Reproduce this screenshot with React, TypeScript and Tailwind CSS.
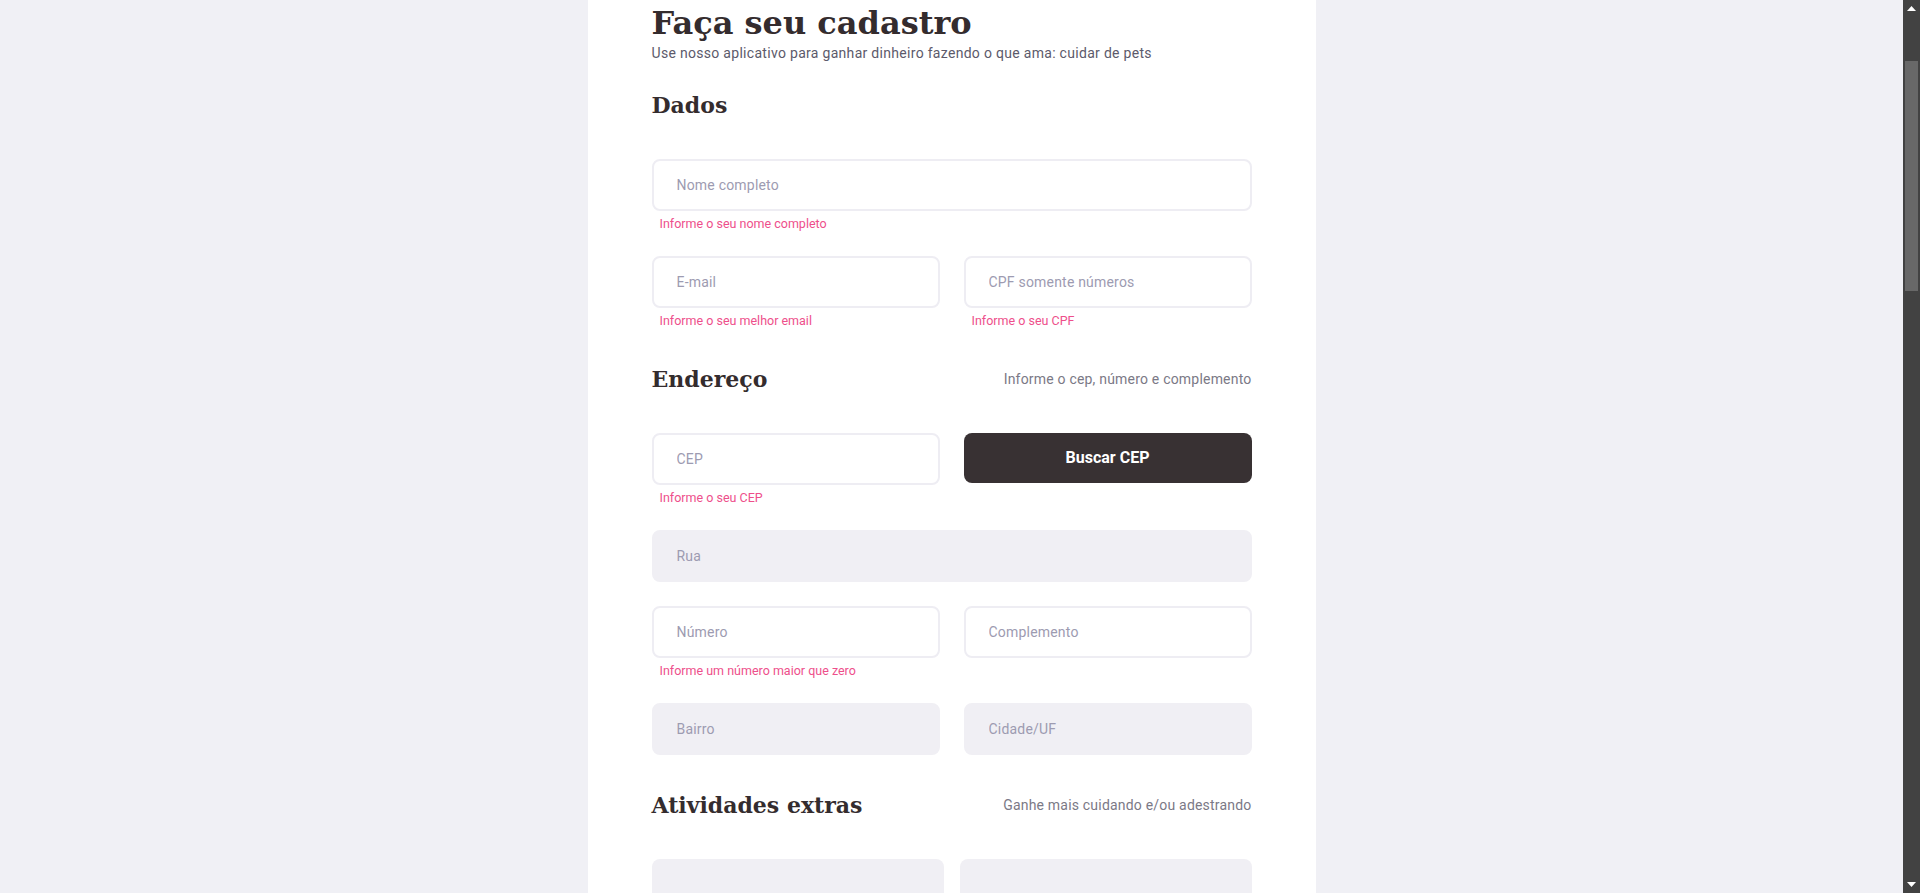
import type { ReactNode } from "react";

const body = "font-['Roboto','Liberation_Sans',sans-serif]";
const serif = "font-['DejaVu_Serif','Liberation_Serif',serif]";

function Field({
  placeholder,
  error,
  disabled,
}: {
  placeholder: string;
  error?: string;
  disabled?: boolean;
}) {
  return (
    <div className="flex flex-col">
      <input
        placeholder={placeholder}
        disabled={disabled}
        className={
          "h-[52px] w-full rounded-lg border-2 pl-[23px] text-[14px] tracking-[0.2px] text-[#3b3335] outline-none placeholder:text-[#9d9bb1] " +
          (disabled
            ? "border-[#f0eff4] bg-[#f0eff4]"
            : "border-[#eeedf3] bg-white")
        }
      />
      {error && (
        <span className="mt-[5px] pl-2 text-[12.5px] leading-4 text-[#ee4f8b]">
          {error}
        </span>
      )}
    </div>
  );
}

function SectionTitle({ title, note }: { title: string; note?: string }) {
  return (
    <div className="mt-9 mb-10 flex items-center justify-between">
      <h2 className={serif + " text-[22px] leading-7 font-bold text-[#342c2e]"}>
        {title}
      </h2>
      {note && (
        <span className="text-[14px] tracking-[0.2px] text-[#7b7986]">{note}</span>
      )}
    </div>
  );
}

function Row({ children }: { children: ReactNode }) {
  return <div className="grid grid-cols-2 gap-6">{children}</div>;
}

function Scrollbar() {
  return (
    <div className="flex h-full w-[17px] shrink-0 flex-col bg-[#424242]">
      <div className="flex h-[17px] items-center justify-center">
        <svg width="9" height="5" viewBox="0 0 9 5">
          <path d="M0 5 L4.5 0 L9 5 Z" fill="#ffffff" />
        </svg>
      </div>
      <div className="flex-1 px-[2px] pt-[44px]">
        <div className="h-[230px] bg-[#686868]" />
      </div>
      <div className="flex h-[17px] items-center justify-center">
        <svg width="9" height="5" viewBox="0 0 9 5">
          <path d="M0 0 L9 0 L4.5 5 Z" fill="#ffffff" />
        </svg>
      </div>
    </div>
  );
}

export default function App() {
  return (
    <div className="flex h-screen overflow-hidden bg-[#f0f0f5]">
      <div className="flex-1 overflow-hidden">
        <main className={body + " mx-auto w-[728px] bg-white px-16 pt-[3px] pb-24"}>
          <h1 className={serif + " text-[32px] leading-10 font-bold text-[#342c2e]"}>
            Faça seu cadastro
          </h1>
          <p className="text-[14px] leading-5 tracking-[0.3px] text-[#5c5a6b]">
            Use nosso aplicativo para ganhar dinheiro fazendo o que ama: cuidar de pets
          </p>

          <div className="mt-7 mb-10">
            <h2 className={serif + " text-[22px] leading-7 font-bold text-[#342c2e]"}>
              Dados
            </h2>
          </div>
          <div className="flex flex-col gap-6">
            <Field placeholder="Nome completo" error="Informe o seu nome completo" />
            <Row>
              <Field placeholder="E-mail" error="Informe o seu melhor email" />
              <Field placeholder="CPF somente números" error="Informe o seu CPF" />
            </Row>
          </div>

          <SectionTitle title="Endereço" note="Informe o cep, número e complemento" />
          <div className="flex flex-col gap-6">
            <Row>
              <Field placeholder="CEP" error="Informe o seu CEP" />
              <div>
                <button className="h-[50px] w-full rounded-lg bg-[#383133] text-[16px] font-bold text-white">
                  Buscar CEP
                </button>
              </div>
            </Row>
            <Field placeholder="Rua" disabled />
            <Row>
              <Field placeholder="Número" error="Informe um número maior que zero" />
              <Field placeholder="Complemento" />
            </Row>
            <Row>
              <Field placeholder="Bairro" disabled />
              <Field placeholder="Cidade/UF" disabled />
            </Row>
          </div>

          <SectionTitle title="Atividades extras" note="Ganhe mais cuidando e/ou adestrando" />
          <div className="grid grid-cols-2 gap-4">
            <div className="h-[220px] rounded-lg bg-[#f0eff4]" />
            <div className="h-[220px] rounded-lg bg-[#f0eff4]" />
          </div>
        </main>
      </div>
      <Scrollbar />
    </div>
  );
}
